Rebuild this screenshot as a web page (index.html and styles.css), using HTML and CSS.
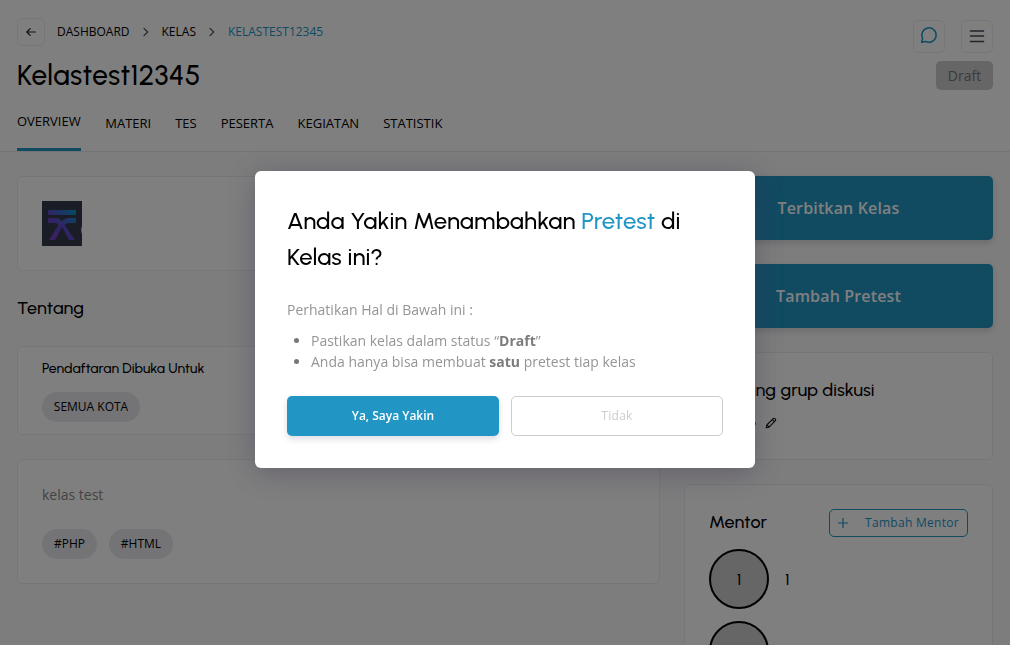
FILE: index.html
```html
<!DOCTYPE html>
<html lang="id">
<head>
<meta charset="utf-8">
<title>Kelastest12345</title>
<link rel="stylesheet" href="styles.css">
</head>
<body>
<div class="page">
  <header class="header">
    <div class="header-main">
      <nav class="breadcrumb">
        <span class="back"><svg width="12" height="12" viewBox="0 0 12 12"><path d="M10.300 6H1.800M5.200 2.600L1.800 6l3.400 3.400"/></svg></span>
        <span class="crumb c1">DASHBOARD</span>
        <svg class="chev" width="6" height="10" viewBox="0 0 6 10"><path d="M1 1.400L4.700 5 1 8.600"/></svg>
        <span class="crumb c2">KELAS</span>
        <svg class="chev" width="6" height="10" viewBox="0 0 6 10"><path d="M1 1.400L4.700 5 1 8.600"/></svg>
        <span class="crumb current">KELASTEST12345</span>
      </nav>
      <h1 class="title">Kelastest12345</h1>
      <nav class="tabs">
        <span class="tab active">OVERVIEW</span><span class="tab">MATERI</span><span class="tab">TES</span><span class="tab">PESERTA</span><span class="tab">KEGIATAN</span><span class="tab">STATISTIK</span>
      </nav>
    </div>
    <div class="header-side">
      <div class="actions">
        <span class="action"><svg class="chat-icon" width="18" height="18" viewBox="0 0 18 18"><path class="chat" d="M2.600 12.400A7.200 7.200 0 1 1 5.600 15.400L1.600 16.300Z"/></svg></span>
        <span class="action"><svg class="menu-icon" width="16" height="14" viewBox="0 0 16 14"><path class="menu" d="M1.500 2h13M1.500 7h13M1.500 12.500h13"/></svg></span>
      </div>
      <span class="status">Draft</span>
    </div>
  </header>
  <main class="content">
    <section class="left">
      <div class="card logo-card">
        <svg class="logo" width="40" height="45" viewBox="0 0 40 45">
          <defs><linearGradient id="g" x1="0" y1="1" x2="1" y2="0"><stop offset="0" stop-color="#7c3fd0"/><stop offset=".45" stop-color="#6247c8"/><stop offset="1" stop-color="#0098c8"/></linearGradient></defs>
          <rect width="40" height="45" fill="#343b4a"/>
          <path fill="url(#g)" d="M6 9h28v5H6zM6 17h7q5 0 7 3.500q2-3.500 7-3.500h7v5h-6q-4 0-5.500 2L33 39h-6l-7-13-7 13H7l9.500-15Q15 22 12 22H6z"/>
          <path fill="#ccd0cf" d="M40 25q-2 4 0 8z"/>
        </svg>
      </div>
      <h2 class="heading">Tentang</h2>
      <div class="card city-card">
        <h3 class="subheading">Pendaftaran Dibuka Untuk</h3>
        <span class="pill p-city">SEMUA KOTA</span>
      </div>
      <div class="card about-card">
        <p class="about">kelas test</p>
        <div class="pills"><span class="pill p-php">#PHP</span><span class="pill p-html">#HTML</span></div>
      </div>
    </section>
    <aside class="right">
      <div class="big-btn">Terbitkan Kelas</div>
      <div class="big-btn">Tambah Pretest</div>
      <div class="card group-card">
        <h2 class="group-title">Tentang grup diskusi</h2>
        <div class="group-link"><i class="link-end"></i><svg width="12" height="12" viewBox="0 0 12 12"><path d="M1.200 10.800l.6-2.800L8.400 1.500q.7-.6 1.500.1l.5.5q.7.8 0 1.500L4 10.200zM7.300 2.600l2 2M2 8l2 2.100"/></svg></div>
      </div>
      <div class="card mentor-card">
        <div class="mentor-head">
          <h2 class="mentor-title">Mentor</h2>
          <span class="add-mentor"><svg width="10" height="10" viewBox="0 0 10 10"><path d="M5 0v10M0 5h10"/></svg><span class="add-label">Tambah Mentor</span></span>
        </div>
        <div class="mentor"><span class="avatar">1</span><span>1</span></div>
        <div class="mentor"><span class="avatar"></span></div>
      </div>
    </aside>
  </main>
</div>
<div class="backdrop">
  <div class="modal">
    <h2 class="modal-title">Anda Yakin Menambahkan <b>Pretest</b> di<br>Kelas ini?</h2>
    <p class="modal-note">Perhatikan Hal di Bawah ini :</p>
    <ul class="modal-list">
      <li>Pastikan kelas dalam status “<strong>Draft</strong>”</li>
      <li>Anda hanya bisa membuat <strong>satu</strong> pretest tiap kelas</li>
    </ul>
    <div class="modal-actions"><span class="btn yes">Ya, Saya Yakin</span><span class="btn no">Tidak</span></div>
  </div>
</div>
</body>
</html>
```

FILE: styles.css
```css
* { box-sizing: border-box; margin: 0; padding: 0; }
html, body { height: 645px; overflow: hidden; }
body { font-family: "Open Sans", sans-serif; font-weight: 400; color: #000; background: #fafafa; }
svg { display: block; flex: none; fill: none; stroke-linecap: round; stroke-linejoin: round; }
.page { height: 645px; overflow: hidden; }

.header { height: 152px; background: #fff; border-bottom: 1px solid #e8e8ee; padding: 0 17px; display: flex; justify-content: space-between; }
.breadcrumb { display: flex; align-items: center; height: 28px; margin-top: 18px; font-size: 12px; white-space: nowrap; }
.crumb { padding-bottom: 2px; }
.back { width: 28px; height: 28px; border: 1px solid #ededf2; border-radius: 5px; display: flex; align-items: center; justify-content: center; margin-right: 12px; }
.back path { stroke: #222; stroke-width: 1.2; }
.chev { margin: 0 13px; }
.chev path { stroke: #555; stroke-width: 1.3; }
.crumb.current { color: #2196c5; }
.title { font: 500 28px/36px Urbanist, Lato, sans-serif; letter-spacing: .35px; margin-top: 11px; white-space: nowrap; }
.tabs { display: flex; gap: 24px; height: 58px; font-size: 13px; line-height: 18px; white-space: nowrap; }
.tab { padding-top: 21px; }
.tab.active { padding-top: 19px; border-bottom: 3px solid #2196c5; font-weight: 500; }
.tab.active + .tab { padding-left: .5px; }
.header-side { display: flex; flex-direction: column; align-items: flex-end; padding-top: 20px; }
.actions { display: flex; gap: 16px; }
.action { width: 32px; height: 33px; border: 1px solid #ededf2; border-radius: 5px; display: flex; align-items: center; justify-content: center; }
.chat-icon { margin-bottom: 3px; }
.menu-icon { margin-bottom: 1px; }
.chat { stroke: #2196c5; stroke-width: 1.5; }
.menu { stroke: #464a5f; stroke-width: 1.6; }
.status { margin-top: 8px; width: 57px; height: 29px; border-radius: 5px; background: #ccc; color: #777; font-size: 14px; line-height: 29px; text-align: center; }

.content { padding: 24px 17px 0; display: grid; grid-template-columns: 643px 309px; gap: 24px; }
.card { background: #fff; border: 1px solid #ededf2; border-radius: 5px; padding: 24px; }
.logo-card { height: 95px; }
.heading, .group-title, .mentor-title { font: 500 18px/24px Urbanist, Lato, sans-serif; letter-spacing: .08px; white-space: nowrap; }
.heading { margin: 25px 0 26px; }
.city-card { height: 89px; padding-top: 12px; }
.subheading { font: 500 14px/20px Urbanist, Lato, sans-serif; margin-bottom: 13px; }
.pill { display: inline-flex; align-items: center; justify-content: center; height: 30px; padding-bottom: 2px; border-radius: 15px; background: #e9e9ee; font-size: 12px; white-space: nowrap; }
.p-city { width: 98px; }
.p-php { width: 55px; }
.p-html { width: 64px; }
.about-card { height: 125px; margin-top: 24px; }
.about { font-size: 14px; line-height: 21px; color: #888; margin-bottom: 24px; }
.pills { display: flex; gap: 12px; }
.right { display: flex; flex-direction: column; gap: 24px; }
.big-btn { height: 64px; border-radius: 5px; background: #2196c5; color: #fff; font-size: 16px; font-weight: 600; line-height: 64px; text-align: center; letter-spacing: .15px; box-shadow: 0 3px 6px rgba(40,40,70,.16); }
.group-card { height: 108px; padding-top: 25px; }
.group-link { display: flex; align-items: center; padding-left: 46px; margin-top: 15px; gap: 9px; }
.group-link path { stroke: #111; stroke-width: 1.1; }
.link-end { width: 1px; height: 3px; background: #2196c5; }
.mentor-card { height: 240px; }
.mentor-head { display: flex; justify-content: space-between; align-items: center; margin-bottom: 12px; }
.mentor-title { padding-bottom: 2px; }
.add-mentor { display: flex; align-items: center; gap: 17px; width: 139px; height: 28px; padding-left: 8px; border: 1px solid #2196c5; border-radius: 5px; color: #2196c5; font-size: 12px; white-space: nowrap; letter-spacing: .3px; }
.add-label { padding-bottom: 1px; }
.add-mentor path { stroke: #2196c5; stroke-width: 1.2; }
.mentor { display: flex; align-items: center; gap: 16px; margin-bottom: 12px; font: 500 16px Urbanist, Lato, sans-serif; }
.avatar { width: 60px; height: 60px; border: 2px solid #000; border-radius: 50%; background: #ccc; display: flex; align-items: center; justify-content: center; }

.backdrop { position: fixed; inset: 0; background: rgba(0,0,0,.5); padding: 171px 0 0 255px; }
.modal { width: 500px; height: 297px; background: #fff; border-radius: 6px; padding: 32px; box-shadow: 0 5px 30px rgba(60,50,80,.4); }
.modal-title { font: 500 24px/36px Urbanist, Lato, sans-serif; letter-spacing: .04px; white-space: nowrap; }
.modal-title b { font-weight: 500; color: #2196c5; }
.modal-note { font-size: 14px; line-height: 21px; color: #959595; margin-top: 24px; }
.modal-list { font-size: 14px; line-height: 21px; color: #959595; padding-left: 24px; margin-top: 10px; }
.modal-list li::marker { color: #777; }
.modal-list strong { font-weight: 700; color: #7c7c7c; }
.modal-actions { display: flex; gap: 12px; margin-top: 24px; }
.btn { width: 212px; height: 40px; border-radius: 5px; font-size: 12px; line-height: 40px; text-align: center; }
.yes { background: #2196c5; color: #fff; font-weight: 600; box-shadow: 0 3px 6px rgba(40,40,70,.16); }
.no { border: 1px solid #ccc; color: #ccc; line-height: 38px; letter-spacing: .3px; }
```
